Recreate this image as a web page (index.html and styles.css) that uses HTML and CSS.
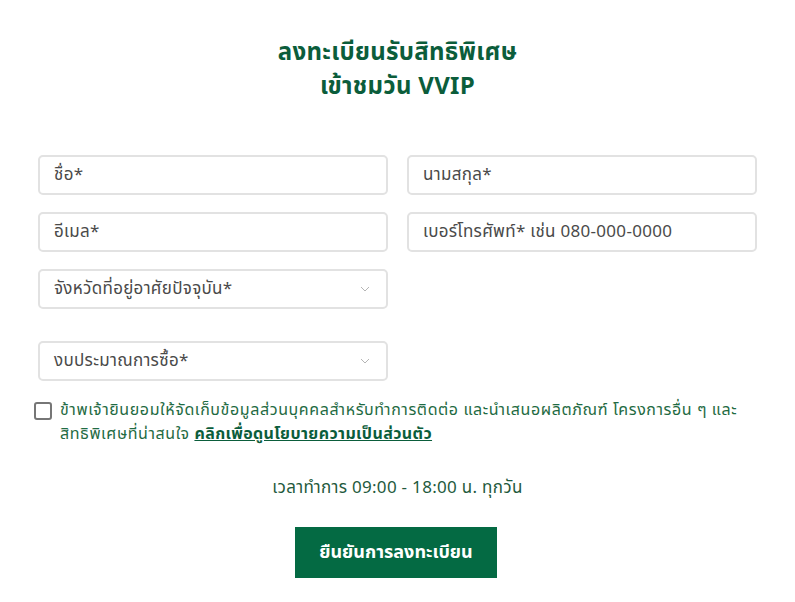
FILE: index.html
```html
<!DOCTYPE html>
<html lang="th">
<head>
<meta charset="utf-8">
<title>ลงทะเบียน</title>
<link rel="stylesheet" href="styles.css">
</head>
<body>
<main class="page">
  <h1 class="title">ลงทะเบียนรับสิทธิพิเศษ<br>เข้าชมวัน VVIP</h1>
  <form class="form">
    <div class="grid">
      <div class="field">ชื่อ*</div>
      <div class="field">นามสกุล*</div>
      <div class="field">อีเมล*</div>
      <div class="field">เบอร์โทรศัพท์* เช่น 080-000-0000</div>
      <div class="field select">จังหวัดที่อยู่อาศัยปัจจุบัน*
        <svg class="chev" width="10" height="6" viewBox="0 0 10 6"><path d="M1 1l4 4 4-4" fill="none" stroke="#b5b5b5" stroke-width="1"/></svg>
      </div>
    </div>
    <div class="grid second">
      <div class="field select">งบประมาณการซื้อ*
        <svg class="chev" width="10" height="6" viewBox="0 0 10 6"><path d="M1 1l4 4 4-4" fill="none" stroke="#b5b5b5" stroke-width="1"/></svg>
      </div>
    </div>
    <label class="consent">
      <span class="box"></span>
      <span class="consent-text">ข้าพเจ้ายินยอมให้จัดเก็บข้อมูลส่วนบุคคลสำหรับทำการติดต่อ และนำเสนอผลิตภัณฑ์ โครงการอื่น ๆ และ<br>สิทธิพิเศษที่น่าสนใจ <a class="link" href="#">คลิกเพื่อดูนโยบายความเป็นส่วนตัว</a></span>
    </label>
    <p class="hours">เวลาทำการ 09:00 - 18:00 น. ทุกวัน</p>
    <div class="actions"><button type="button" class="btn">ยืนยันการลงทะเบียน</button></div>
  </form>
</main>
</body>
</html>
```
FILE: styles.css
```css
* { box-sizing: border-box; }
body {
  margin: 0;
  background: #fff;
  font-family: "Noto Sans Thai", "Noto Sans Thai UI", "Noto Sans", sans-serif;
}
.page {
  width: 719px;
  margin: 0 auto;
  padding-top: 36px;
}
.title {
  margin: 0;
  text-align: center;
  color: #0b5d3b;
  font-size: 24px;
  line-height: 34px;
  font-weight: 700;
  letter-spacing: 0.3px;
}
.form { margin-top: 51px; }
.grid {
  display: grid;
  grid-template-columns: 350px 350px;
  column-gap: 19px;
  row-gap: 17px;
}
.grid.second { margin-top: 32px; }
.field {
  height: 40px;
  border: 2px solid #e2e2e2;
  border-radius: 5px;
  padding: 0 14px;
  display: flex;
  align-items: center;
  justify-content: space-between;
  font-size: 17px;
  letter-spacing: 0.3px;
  color: #4a4a4a;
}
.chev { margin-right: 2px; }
.consent {
  display: flex;
  align-items: flex-start;
  margin: 20px 0 0 -4px;
  gap: 8px;
}
.box {
  flex: none;
  width: 18px;
  height: 18px;
  border: 2px solid #767676;
  border-radius: 3px;
  margin-top: 1px;
}
.consent-text {
  font-size: 16px;
  line-height: 24px;
  letter-spacing: 0.6px;
  color: #1f6b43;
  margin-top: -3px;
}
.link {
  color: #0b5d3b;
  font-weight: 700;
  letter-spacing: 0.4px;
  text-decoration: underline;
}
.hours {
  margin: 30px 0 0;
  text-align: center;
  font-size: 17px;
  line-height: 24px;
  letter-spacing: 0.3px;
  color: #1f5a3d;
}
.actions {
  display: flex;
  justify-content: center;
  margin-top: 27px;
  padding-right: 3px;
}
.btn {
  width: 202px;
  height: 51px;
  border: 0;
  background: #046a43;
  color: #fff;
  font-family: inherit;
  font-size: 18px;
  font-weight: 700;
}
```
